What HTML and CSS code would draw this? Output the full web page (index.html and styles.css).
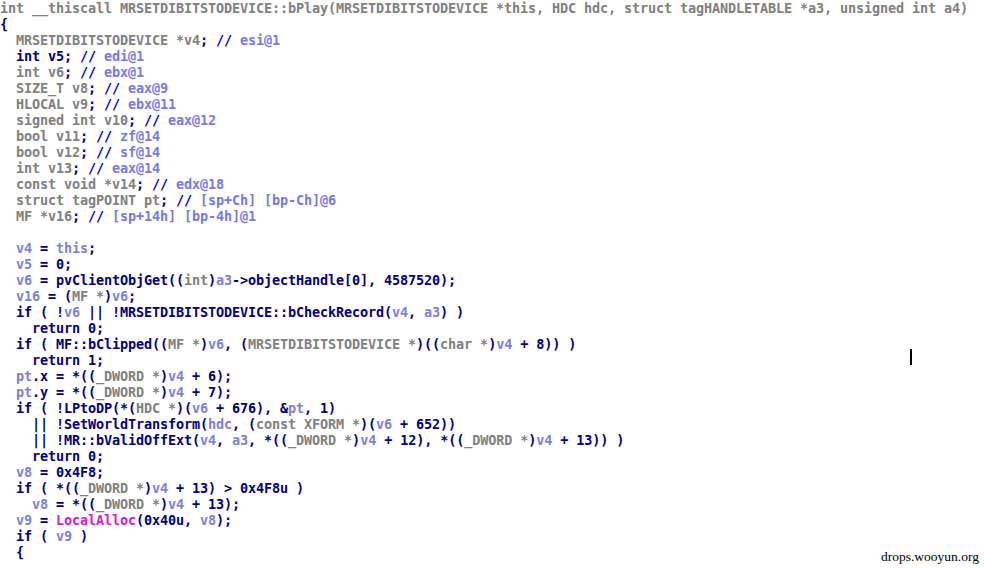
FILE: index.html
```html
<!DOCTYPE html>
<html>
<head>
<meta charset="utf-8">
<link rel="stylesheet" href="styles.css">
</head>
<body>
<div class="code">
<div class="ln g">int __thiscall MRSETDIBITSTODEVICE::bPlay(MRSETDIBITSTODEVICE *this, HDC hdc, struct tagHANDLETABLE *a3, unsigned int a4)</div>
<div class="ln">{</div>
<div class="ln"><span class="g">  MRSETDIBITSTODEVICE *v4</span>; <span class="c">//</span> <span class="m">esi@1</span></div>
<div class="ln">  int v5; <span class="c">//</span> <span class="m">edi@1</span></div>
<div class="ln"><span class="g">  int v6</span>; <span class="c">//</span> <span class="m">ebx@1</span></div>
<div class="ln"><span class="g">  SIZE_T v8</span>; <span class="c">//</span> <span class="m">eax@9</span></div>
<div class="ln"><span class="g">  HLOCAL v9</span>; <span class="c">//</span> <span class="m">ebx@11</span></div>
<div class="ln"><span class="g">  signed int v10</span>; <span class="c">//</span> <span class="m">eax@12</span></div>
<div class="ln"><span class="g">  bool v11</span>; <span class="c">//</span> <span class="m">zf@14</span></div>
<div class="ln"><span class="g">  bool v12</span>; <span class="c">//</span> <span class="m">sf@14</span></div>
<div class="ln"><span class="g">  int v13</span>; <span class="c">//</span> <span class="m">eax@14</span></div>
<div class="ln"><span class="g">  const void *v14</span>; <span class="c">//</span> <span class="m">edx@18</span></div>
<div class="ln"><span class="g">  struct tagPOINT pt</span>; <span class="c">//</span> <span class="m">[sp+Ch] [bp-Ch]@6</span></div>
<div class="ln"><span class="g">  MF *v16</span>; <span class="c">//</span> <span class="m">[sp+14h] [bp-4h]@1</span></div>
<div class="ln"> </div>
<div class="ln">  <span class="v">v4</span> = <span class="v">this</span>;</div>
<div class="ln">  <span class="v">v5</span> = 0;</div>
<div class="ln">  <span class="v">v6</span> = pvClientObjGet((<span class="g">int</span>)<span class="v">a3</span>-&gt;objectHandle[0], 4587520);</div>
<div class="ln">  <span class="v">v16</span> = (<span class="g">MF *</span>)<span class="v">v6</span>;</div>
<div class="ln">  if ( !<span class="v">v6</span> || !MRSETDIBITSTODEVICE::bCheckRecord(<span class="v">v4</span>, <span class="v">a3</span>) )</div>
<div class="ln">    return 0;</div>
<div class="ln">  if ( MF::bClipped((<span class="g">MF *</span>)<span class="v">v6</span>, (<span class="g">MRSETDIBITSTODEVICE *</span>)((<span class="g">char *</span>)<span class="v">v4</span> + 8)) )</div>
<div class="ln">    return 1;</div>
<div class="ln">  <span class="v">pt</span>.x = *((<span class="g">_DWORD *</span>)<span class="v">v4</span> + 6);</div>
<div class="ln">  <span class="v">pt</span>.y = *((<span class="g">_DWORD *</span>)<span class="v">v4</span> + 7);</div>
<div class="ln">  if ( !LPtoDP(*(<span class="g">HDC *</span>)(<span class="v">v6</span> + 676), &amp;<span class="v">pt</span>, 1)</div>
<div class="ln">    || !SetWorldTransform(<span class="v">hdc</span>, (<span class="g">const XFORM *</span>)(<span class="v">v6</span> + 652))</div>
<div class="ln">    || !MR::bValidOffExt(<span class="v">v4</span>, <span class="v">a3</span>, *((<span class="g">_DWORD *</span>)<span class="v">v4</span> + 12), *((<span class="g">_DWORD *</span>)<span class="v">v4</span> + 13)) )</div>
<div class="ln">    return 0;</div>
<div class="ln">  <span class="v">v8</span> = 0x4F8;</div>
<div class="ln">  if ( *((<span class="g">_DWORD *</span>)<span class="v">v4</span> + 13) &gt; 0x4F8u )</div>
<div class="ln">    <span class="v">v8</span> = *((<span class="g">_DWORD *</span>)<span class="v">v4</span> + 13);</div>
<div class="ln">  <span class="v">v9</span> = <span class="f">LocalAlloc</span>(0x40u, <span class="v">v8</span>);</div>
<div class="ln">  if ( <span class="v">v9</span> )</div>
<div class="ln">  {</div>
</div>
<span class="caret"></span>
<span class="mark">drops.wooyun.org</span>
</body>
</html>
```

FILE: styles.css
```css
html, body {
  margin: 0;
  padding: 0;
  background: #ffffff;
  width: 984px;
  height: 568px;
  overflow: hidden;
}
.code {
  font-family: "DejaVu Sans Mono", monospace;
  font-weight: bold;
  font-size: 13.5px;
  letter-spacing: -0.127px;
  line-height: 16px;
  color: #000080;
}
.ln {
  white-space: pre;
  height: 16px;
}
.g { color: #808080; }
.v { color: #7f7fd6; }
.c { color: #0000c8; }
.m { color: #7878e8; }
.f { color: #d020d0; }
.caret {
  position: absolute;
  left: 910px;
  top: 349px;
  width: 2px;
  height: 16px;
  background: #000000;
}
.mark {
  position: absolute;
  right: 5px;
  bottom: 3px;
  font-family: "Liberation Serif", serif;
  font-size: 13.5px;
  color: #000000;
}
```
